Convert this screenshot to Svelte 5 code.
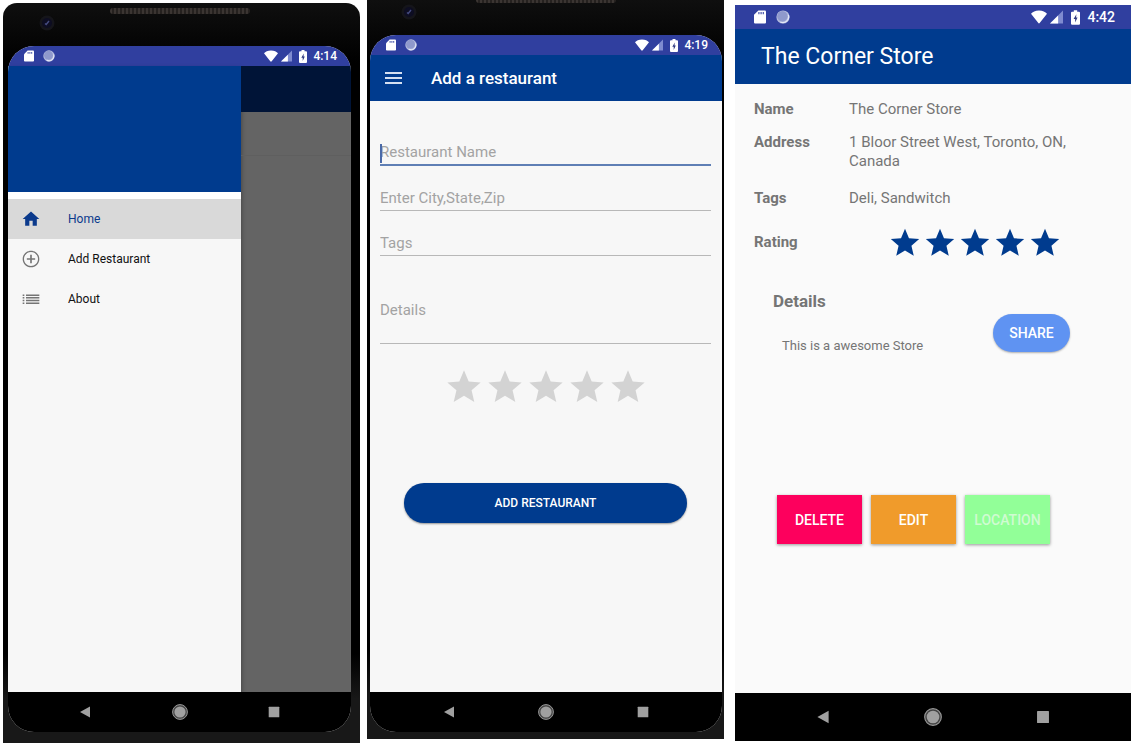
<script>
  const star =
    'M12 17.27L18.18 21l-1.64-7.03L22 9.24l-7.19-.61L12 2 9.19 8.63 2 9.24l5.46 4.73L5.82 21z';
  const steps = [1, 2, 3, 4, 5];

  const menu = [
    { label: 'Home', path: 'M10 20v-6h4v6h5v-8h3L12 3 2 12h3v8z', active: true },
    {
      label: 'Add Restaurant',
      path: 'M13 7h-2v4H7v2h4v4h2v-4h4v-2h-4V7zm-1-5C6.48 2 2 6.48 2 12s4.48 10 10 10 10-4.48 10-10S17.52 2 12 2zm0 18.4c-4.63 0-8.4-3.77-8.4-8.4S7.37 3.6 12 3.6s8.4 3.77 8.4 8.4-3.77 8.4-8.4 8.4z',
      active: false
    },
    {
      label: 'About',
      path: 'M2 6.500h2v1.800H2zM2 9.700h2v1.800H2zM2 12.900h2v1.800H2zM2 16.100h2v1.800H2zM6 6.500h16v1.800H6zM6 9.700h16v1.800H6zM6 12.900h16v1.800H6zM6 16.100h16v1.800H6z',
      active: false
    }
  ];

  let name = $state('');
  let place = $state('');
  let tags = $state('');
  let details = $state('');
  let rating = $state(0);
</script>

{#snippet statusBar(time)}
  <div class="status">
    <svg class="sd" viewBox="0 0 11 12" aria-hidden="true">
      <path fill="#fff" d="M4 0h6a1 1 0 0 1 1 1v10a1 1 0 0 1-1 1H1a1 1 0 0 1-1-1V4z" />
      <path fill="#3040a0" d="M4 1.5h1v2H4zM6 1.5h1v2H6zM8 1.5h1v2H8z" />
    </svg>
    <svg class="sync" viewBox="0 0 14 14" aria-hidden="true">
      <circle cx="7" cy="7" r="6.6" fill="#b3badd" />
      <circle cx="6.4" cy="6.2" r="5.2" fill="#8f99cc" />
      <path d="M12.4 5a5.8 5.8 0 0 1-8 7" fill="none" stroke="#e4e8f7" stroke-width="1.2" />
    </svg>
    <span class="space"></span>
    <svg class="wifi" viewBox="0 0 15 12" aria-hidden="true">
      <path fill="#fff" d="M0 3C1.500 1.200 4 0 7.500 0S13.500 1.200 15 3L8.300 11.500a1 1 0 0 1-1.600 0z" />
    </svg>
    <svg class="signal" viewBox="0 0 12 12" aria-hidden="true">
      <path fill="#7f8bd0" d="M12 0v12H0z" />
      <path fill="#fff" d="M7.500 4.500V12H0z" />
    </svg>
    <svg class="battery" viewBox="0 0 8 13" aria-hidden="true">
      <path fill="#fff" d="M2.500 0h3v1.300H7a1 1 0 0 1 1 1V12a1 1 0 0 1-1 1H1a1 1 0 0 1-1-1V2.300a1 1 0 0 1 1-1h1.500z" />
      <path fill="#303a80" d="M4.800 3.500L2.300 7.800h1.400v3.200L5.800 6.600H4.500z" />
    </svg>
    <span class="time">{time}</span>
  </div>
{/snippet}

{#snippet navBar()}
  <nav class="system" aria-label="System">
    <button aria-label="Back">
      <svg viewBox="0 0 16 16"><path fill="#a0a0a0" d="M13 2.500v11L3 8z" /></svg>
    </button>
    <button aria-label="Start">
      <svg viewBox="0 0 16 16">
        <circle cx="8" cy="8" r="7.400" fill="#444" stroke="#999" stroke-width="1" />
        <circle cx="8" cy="8" r="5.600" fill="#a0a0a0" />
      </svg>
    </button>
    <button aria-label="Overview">
      <svg viewBox="0 0 16 16"><rect x="2.700" y="2.700" width="10.600" height="10.600" rx=".5" fill="#a0a0a0" /></svg>
    </button>
  </nav>
{/snippet}

{#snippet bezel()}
  <div class="bezel" aria-hidden="true">
    <svg class="camera" viewBox="0 0 16 16">
      <circle cx="8" cy="8" r="7.500" fill="#15151a" />
      <circle cx="8" cy="8" r="5" fill="#0d0d22" />
      <path d="M6 8.500l1.200 1L10 6" fill="none" stroke="#454b80" stroke-width="1.400" />
    </svg>
    <span class="speaker"></span>
  </div>
{/snippet}

<main>
  <section class="device first">
    {@render bezel()}
    <div class="screen">
      {@render statusBar('4:14')}
      <div class="home">
        <aside class="drawer">
          <div class="banner"></div>
          <ul>
            {#each menu as item}
              <li>
                <a href="#menu" class:active={item.active}>
                  <svg viewBox="0 0 24 24" aria-hidden="true"><path fill="currentColor" d={item.path} /></svg>
                  <span>{item.label}</span>
                </a>
              </li>
            {/each}
          </ul>
        </aside>
        <div class="scrim">
          <div class="dimmed-bar"></div>
          <div class="dimmed-row"></div>
        </div>
      </div>
      {@render navBar()}
    </div>
  </section>

  <section class="device second">
    {@render bezel()}
    <div class="screen">
      {@render statusBar('4:19')}
      <header class="appbar">
        <button class="burger" aria-label="Open menu">
          <svg viewBox="0 0 17 12"><path fill="#d5e0f2" d="M0 0h17v2H0zM0 5h17v2H0zM0 10h17v2H0z" /></svg>
        </button>
        <h1>Add a restaurant</h1>
      </header>
      <form onsubmit={(e) => e.preventDefault()}>
        <label class="field current">
          <input type="text" aria-label="Restaurant Name" placeholder="Restaurant Name" bind:value={name} />
        </label>
        <label class="field">
          <input type="text" aria-label="Enter City,State,Zip" placeholder="Enter City,State,Zip" bind:value={place} />
        </label>
        <label class="field">
          <input type="text" aria-label="Tags" placeholder="Tags" bind:value={tags} />
        </label>
        <label class="field tall">
          <textarea aria-label="Details" placeholder="Details" bind:value={details}></textarea>
        </label>
        <div class="stars pick" role="radiogroup" aria-label="Rating">
          {#each steps as n}
            <label class:on={n <= rating}>
              <input type="radio" name="rating" value={n} aria-label={String(n)} bind:group={rating} />
              <svg viewBox="0 0 24 24" aria-hidden="true"><path fill="currentColor" d={star} /></svg>
            </label>
          {/each}
        </div>
        <button class="submit" type="submit">ADD RESTAURANT</button>
      </form>
      {@render navBar()}
    </div>
  </section>

  <section class="device third">
    <div class="screen">
      {@render statusBar('4:42')}
      <header class="appbar"><h1>The Corner Store</h1></header>
      <div class="store">
        <dl>
          <dt>Name</dt>
          <dd>The Corner Store</dd>
          <dt>Address</dt>
          <dd class="address">1 Bloor Street West, Toronto, ON, Canada</dd>
          <dt>Tags</dt>
          <dd>Deli, Sandwitch</dd>
          <dt class="rated">Rating</dt>
          <dd class="stars shown">
            {#each steps as n (n)}
              <svg viewBox="0 0 24 24" aria-hidden="true"><path fill="currentColor" d={star} /></svg>
            {/each}
          </dd>
        </dl>
        <div class="about">
          <div>
            <h2>Details</h2>
            <p>This is a awesome Store</p>
          </div>
          <button class="share">SHARE</button>
        </div>
        <div class="actions">
          <button class="delete">DELETE</button>
          <button class="edit">EDIT</button>
          <button class="location">LOCATION</button>
        </div>
      </div>
      {@render navBar()}
    </div>
  </section>
</main>

<style>
  :global(body) {
    margin: 0;
    background: #fff;
  }

  main {
    box-sizing: border-box;
    min-height: 100vh;
    display: grid;
    grid-template-columns: 357fr 357fr 400fr;
    gap: 7px;
    padding: 0 2px 0 3px;
    font-family: Roboto, sans-serif;
  }

  button {
    border: 0;
    padding: 0;
    font-family: inherit;
    font-weight: 500;
    color: #fff;
    cursor: pointer;
  }

  svg {
    display: block;
  }

  h1,
  h2,
  p,
  ul,
  dl,
  dd {
    margin: 0;
    padding: 0;
  }

  /* Device frames */
  .device {
    display: flex;
    flex-direction: column;
    box-sizing: border-box;
    min-width: 0;
    overflow: hidden;
    background: linear-gradient(#0f0f0f, #050505 40px, #000 60px, #000 88%, #181818 94%);
  }

  .first {
    margin-top: 3px;
    padding: 0 9px 11px 5px;
    border-radius: 14px 14px 0 0;
  }

  .second {
    margin-bottom: 4px;
    padding: 0 2px 7px 3px;
  }

  .third {
    margin: 5px 0 2px 4px;
  }

  .bezel {
    display: grid;
    grid-template-columns: 1fr 140px 1fr;
    height: 43px;
  }

  .second .bezel {
    margin-top: -8px;
  }

  .camera {
    width: 16px;
    height: 16px;
    margin: 12px 0 0 31px;
  }

  .speaker {
    height: 6px;
    margin-top: 5px;
    border-radius: 3px;
    background: repeating-linear-gradient(90deg, #3b3532 0 2px, #25211f 2px 4px);
  }

  .screen {
    flex: 1;
    display: flex;
    flex-direction: column;
    overflow: hidden;
    border-radius: 26px;
    background: #f7f7f7;
  }

  .third .screen {
    border-radius: 0;
    background: #fafafa;
  }

  /* Status bar */
  .status {
    display: flex;
    align-items: center;
    height: 20px;
    padding: 0 14px 0 16px;
    background: #303f9f;
    color: #fff;
    font-size: 12px;
    font-weight: 500;
  }

  .space {
    flex: 1;
  }

  .sd {
    width: 10px;
    height: 12px;
    margin-right: 9px;
  }

  .sync {
    width: 12px;
    height: 12px;
  }

  .wifi {
    width: 14px;
    height: 12px;
    margin-right: 3px;
  }

  .signal {
    width: 11px;
    height: 12px;
    margin-right: 7px;
  }

  .battery {
    width: 8px;
    height: 13px;
    margin-right: 6px;
  }

  .third .status {
    height: 24px;
    padding: 0 16px 0 19px;
    font-size: 14px;
  }

  .third .sd {
    width: 12px;
    height: 14px;
    margin-right: 10px;
  }

  .third .sync {
    width: 14px;
    height: 14px;
  }

  .third .wifi {
    width: 16px;
    height: 14px;
  }

  .third .signal {
    width: 13px;
    height: 14px;
    margin-right: 8px;
  }

  .third .battery {
    width: 9px;
    height: 15px;
    margin-right: 7px;
  }

  /* System navigation */
  .system {
    display: grid;
    grid-template-columns: repeat(3, 1fr);
    align-items: center;
    height: 40px;
    padding: 0 8.5%;
    background: #000;
  }

  .system button {
    justify-self: center;
    background: none;
  }

  .system svg {
    width: 16px;
    height: 16px;
  }

  .third .system {
    height: 48px;
  }

  .third .system svg {
    width: 18px;
    height: 18px;
  }

  /* Drawer */
  .home {
    flex: 1;
    display: flex;
    background: #646464;
  }

  .drawer {
    width: 68%;
    background: #f7f7f7;
    box-shadow: 0 3px 5px rgba(0, 0, 0, 0.4);
  }

  .banner {
    height: 126px;
    background: #003b8e;
  }

  ul {
    padding-top: 7px;
    list-style: none;
    background: linear-gradient(#fff 7px, transparent 7px);
  }

  .drawer a {
    display: flex;
    align-items: center;
    gap: 27px;
    height: 40px;
    padding-left: 13px;
    color: #757575;
    font-size: 12px;
    font-weight: 400;
    text-decoration: none;
  }

  .drawer a svg {
    width: 20px;
    height: 20px;
  }

  .drawer a span {
    color: #111;
  }

  .drawer a.active {
    background: #d9d9d9;
  }

  .drawer a.active,
  .drawer a.active span {
    color: #0b3a8c;
  }

  .scrim {
    flex: 1;
  }

  .dimmed-bar {
    height: 46px;
    background: #001437;
  }

  .dimmed-row {
    height: 43px;
    border-bottom: 1px solid #5f5f5f;
  }

  /* App bars */
  .appbar {
    display: flex;
    align-items: center;
    height: 46px;
    background: #003b8e;
    color: #fff;
  }

  .burger {
    margin: 0 29px 0 15px;
    background: none;
  }

  .burger svg {
    width: 17px;
    height: 12px;
  }

  h1 {
    font-size: 17px;
    font-weight: 500;
  }

  .third .appbar {
    height: 55px;
    padding-left: 26px;
  }

  .third h1 {
    font-size: 23px;
    font-weight: 400;
  }

  /* Restaurant form */
  form {
    flex: 1;
    display: flex;
    flex-direction: column;
    padding: 20px 11px 0 10px;
  }

  .field {
    display: flex;
    align-items: flex-end;
    position: relative;
    height: 45px;
  }

  .field.tall {
    height: 88px;
  }

  .field input,
  .field textarea {
    box-sizing: border-box;
    width: 100%;
    height: 24px;
    margin: 0;
    padding: 0 0 2px;
    border: 0;
    border-bottom: 1px solid #b8b8b8;
    border-radius: 0;
    outline: 0;
    resize: none;
    background: none;
    color: #333;
    font-family: inherit;
    font-size: 15px;
    line-height: 20px;
  }

  .field textarea {
    height: 44px;
  }

  .field ::placeholder {
    color: #a3a3a3;
    opacity: 1;
  }

  .field.current input {
    border-bottom: 2px solid #5f7fb5;
  }

  .field.current::before {
    content: '';
    position: absolute;
    left: 0;
    bottom: 3px;
    width: 2px;
    height: 19px;
    background: #4a6aa8;
  }

  .stars {
    display: flex;
    gap: 1px;
  }

  .pick {
    justify-content: center;
    margin-top: 23px;
    color: #d3d3d3;
  }

  .pick label {
    position: relative;
  }

  .pick input {
    position: absolute;
    inset: 0;
    margin: 0;
    opacity: 0;
    width: 100%;
    height: 100%;
  }

  .pick .on {
    color: #003b8e;
  }

  .pick svg {
    width: 40px;
    height: 40px;
  }

  .submit {
    height: 40px;
    margin: 76px 24px 0;
    border-radius: 20px;
    background: #003b8e;
    box-shadow: 0 1px 2px rgba(0, 0, 0, 0.4);
    font-size: 12px;
  }

  /* Store page */
  .store {
    flex: 1;
    color: #757575;
  }

  dl {
    display: grid;
    grid-template-columns: 95px 1fr;
    align-items: start;
    padding: 16px 54px 0 19px;
    font-size: 15px;
    line-height: 19px;
  }

  dt {
    font-weight: 700;
  }

  dd {
    margin-bottom: 14px;
  }

  .address {
    margin-bottom: 18px;
  }

  .rated {
    margin-top: 11px;
  }

  .shown {
    justify-content: flex-end;
    margin: 4px 15px 0 0;
    color: #003b8e;
  }

  .shown svg {
    width: 34px;
    height: 34px;
  }

  .about {
    display: flex;
    justify-content: space-between;
    align-items: flex-end;
    padding: 30px 61px 0 38px;
  }

  h2 {
    font-size: 17px;
    font-weight: 700;
    line-height: 22px;
  }

  p {
    padding: 25px 0 0 9px;
    font-size: 13px;
    line-height: 18px;
  }

  .share {
    width: 77px;
    height: 38px;
    margin-bottom: 3px;
    border-radius: 19px;
    background: #5f93f2;
    box-shadow: 0 1px 2px rgba(0, 0, 0, 0.3);
    font-size: 14px;
  }

  .actions {
    display: flex;
    gap: 9px;
    padding: 140px 0 0 42px;
  }

  .actions button {
    width: 85px;
    height: 49px;
    box-shadow: 0 1px 3px rgba(0, 0, 0, 0.4);
    font-size: 14px;
  }

  .delete {
    background: #fd005d;
  }

  .edit {
    background: #f09b2b;
  }

  .actions .location {
    background: #92ff98;
    color: #d0fbd2;
  }
</style>
